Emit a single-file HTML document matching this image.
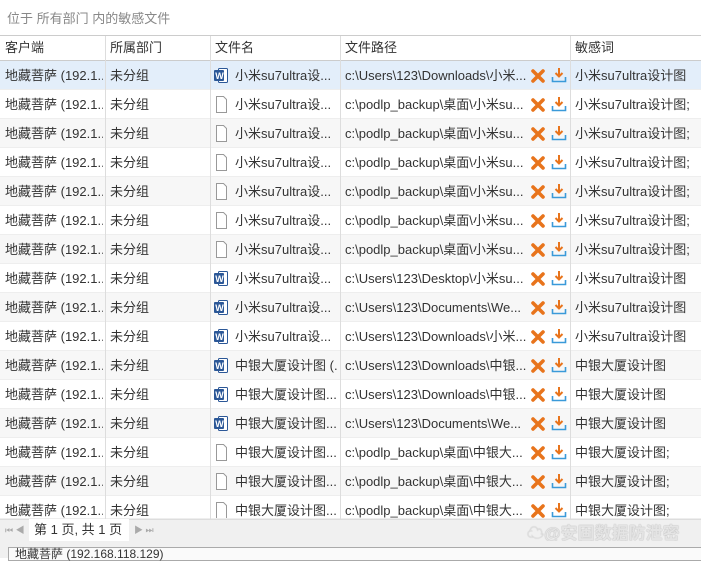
<!DOCTYPE html>
<html><head><meta charset="utf-8"><style>
*{margin:0;padding:0;box-sizing:border-box}
body{width:701px;height:558px;overflow:hidden;background:#fff;font-family:"Liberation Sans","Noto Sans CJK SC",sans-serif;font-size:13px;color:#333;position:relative}
.title{position:absolute;left:7px;top:8px;color:#888;font-size:13px}
.topline{position:absolute;left:0;top:35px;width:701px;border-top:1px solid #ccc}
.row{position:absolute;left:0;width:701px;height:29px;line-height:29px;white-space:nowrap}
.c{position:absolute;top:0;height:29px;overflow:hidden}
.vl{position:absolute;top:36px;height:484px;border-left:1px solid #ddd}
.hdr{background:#fff;border-bottom:1px solid #ccc;height:25px;line-height:24px;top:36px}
.ico{position:absolute;left:4px;top:6px;width:15px;height:17px}
.x{position:absolute;left:531px;top:8px}
.dl{position:absolute;left:551px;top:6px}
</style></head><body>
<div class="title">位于 所有部门 内的敏感文件</div>
<div class="topline"></div>
<div class="row hdr"><div class="c" style="left:5px">客户端</div><div class="c" style="left:110px">所属部门</div><div class="c" style="left:215px">文件名</div><div class="c" style="left:345px">文件路径</div><div class="c" style="left:575px">敏感词</div></div>
<div id="rows"></div>
<div class="vl" style="left:105px"></div><div class="vl" style="left:210px"></div><div class="vl" style="left:340px"></div><div class="vl" style="left:570px"></div>
<div style="position:absolute;left:0;top:519px;width:701px;height:22px;background:#f0f0f0;border-top:1px solid #ddd"></div>
<div style="position:absolute;left:5px;top:523px;color:#aaa;font-size:9px">⏮ ◀</div>
<div style="position:absolute;left:29px;top:519px;width:100px;height:22px;background:#fff;line-height:21px;padding-left:5px">第 1 页, 共 1 页</div>
<div style="position:absolute;left:134px;top:523px;color:#aaa;font-size:9px">▶ ⏭</div>
<div style="position:absolute;left:527px;top:519px;color:#e4e4e4;font-size:17px;font-weight:bold;text-shadow:0 0 1px #999">☁@安固数据防泄密</div>
<div style="position:absolute;left:0;top:541px;width:701px;height:17px;background:#f0f0f0"></div>
<div style="position:absolute;left:8px;top:547px;width:700px;height:14px;border:1px solid #aaa;background:#fafafa;font-size:12px;line-height:12px;padding-left:6px">地藏菩萨 (192.168.118.129)</div>
<script>
var W='<svg class="ico" viewBox="0 0 15 17"><rect x="4.5" y="1.5" width="9" height="14" rx="1" fill="#fff" stroke="#2b5797"/><rect x="0" y="3" width="10" height="11" rx="1" fill="#2b5797"/><text x="1.2" y="12" fill="#fff" font-size="9" font-weight="bold" font-family="Liberation Sans">W</text></svg>';
var F='<svg class="ico" viewBox="0 0 15 17"><path d="M2.5 .5h7l3 3v13h-10z" fill="#fff" stroke="#999"/></svg>';
var X='<svg class="x" width="14" height="14" viewBox="0 0 14 14"><path d="M2 2L12 12M12 2L2 12" stroke="#e8741c" stroke-width="3.6" stroke-linecap="round"/></svg>';
var D='<svg class="dl" width="16" height="16" viewBox="0 0 16 16"><path d="M8 1v8M4.5 6l3.5 3.5 3.5-3.5" stroke="#e8741c" stroke-width="2" fill="none"/><path d="M1.5 10v4.5h13V10" stroke="#3a9ad9" stroke-width="1.6" fill="none"/></svg>';
var A='小米su7ultra设...',B='中银大厦设计图....';
var r=[[W,A,'c:\\Users\\123\\Downloads\\小米...','小米su7ultra设计图']];
for(var i=0;i<6;i++)r.push([F,A,'c:\\podlp_backup\\桌面\\小米su...','小米su7ultra设计图;']);
r.push([W,A,'c:\\Users\\123\\Desktop\\小米su...','小米su7ultra设计图']);
r.push([W,A,'c:\\Users\\123\\Documents\\We...','小米su7ultra设计图']);
r.push([W,A,'c:\\Users\\123\\Downloads\\小米...','小米su7ultra设计图']);
r.push([W,'中银大厦设计图 (...','c:\\Users\\123\\Downloads\\中银...','中银大厦设计图']);
r.push([W,B,'c:\\Users\\123\\Downloads\\中银...','中银大厦设计图']);
r.push([W,B,'c:\\Users\\123\\Documents\\We...','中银大厦设计图']);
for(i=0;i<3;i++)r.push([F,B,'c:\\podlp_backup\\桌面\\中银大...','中银大厦设计图;']);
var h='';
r.forEach(function(x,i){var bg=i==0?'#e3eefa':(i%2?'#fff':'#f7f7f7');var t=61+i*29;var hh=Math.min(29,519-t);
h+='<div class="row" style="top:'+t+'px;height:'+hh+'px;overflow:hidden;background:'+bg+';border-bottom:1px solid #eee"><div class="c" style="left:5px;width:98px">地藏菩萨 (192.1...</div><div class="c" style="left:110px">未分组</div><div class="c" style="left:210px;width:128px">'+x[0]+'<span style="position:absolute;left:25px">'+x[1]+'</span></div><div class="c" style="left:345px;width:183px">'+x[2]+'</div>'+X+D+'<div class="c" style="left:575px">'+x[3]+'</div></div>';});
document.getElementById('rows').innerHTML=h;
</script>
</body></html>
